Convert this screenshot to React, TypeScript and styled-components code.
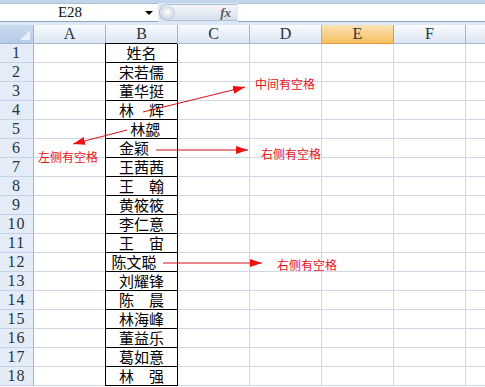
import styled, { createGlobalStyle } from 'styled-components'

const GlobalStyle = createGlobalStyle`
  html, body {
    margin: 0;
    padding: 0;
    background: #fff;
  }
  body {
    width: 485px;
    height: 387px;
    overflow: hidden;
  }
`

const Window = styled.div`
  position: relative;
  width: 485px;
  height: 387px;
  overflow: hidden;
  background: #fff;
  display: flex;
  flex-direction: column;
`

// Formula bar

const FormulaBar = styled.div`
  flex: none;
  height: 25px;
  box-sizing: border-box;
  border-top: 3px solid #c3d5ec;
  background: #dde8f5;
  padding-bottom: 3px;
  display: flex;
`

const NameBox = styled.div`
  width: 158px;
  box-sizing: border-box;
  background: #fff;
  border-top: 1px solid #aebfd4;
  border-bottom: 1px solid #8fa6c2;
  display: flex;
  align-items: center;
  font-family: 'Liberation Serif', serif;
  font-size: 15px;
  color: #111;

  .name {
    width: 140px;
    text-align: center;
  }
`

const DropArrow = styled.span`
  width: 0;
  height: 0;
  margin-left: 5px;
  border-left: 4px solid transparent;
  border-right: 4px solid transparent;
  border-top: 4px solid #000;
`

const FxPill = styled.div`
  width: 78px;
  margin: 1px 0 1px 1px;
  box-sizing: border-box;
  border: 1px solid #aebfd4;
  border-right: none;
  border-radius: 9px 0 0 9px;
  background: linear-gradient(#f4f7fb, #d6e0ec);
  display: flex;
  align-items: center;
  justify-content: space-between;
  padding: 0 6px 0 2px;
`

const RoundKnob = styled.span`
  width: 12px;
  height: 12px;
  border-radius: 50%;
  background: radial-gradient(circle at 45% 40%, #fdfdfd 0, #dde2e8 55%, #b9c2cc 100%);
  box-shadow: 0 0 0 1px #c8d1dc;
`

const FxText = styled.span`
  font-family: 'Liberation Serif', serif;
  font-style: italic;
  font-weight: bold;
  font-size: 13px;
  color: #5a5a5a;
`

const FormulaInput = styled.div`
  flex: 1;
  margin-left: 1px;
  background: #fff;
  border-top: 1px solid #aebfd4;
  border-bottom: 1px solid #8fa6c2;
`

// Sheet

const Sheet = styled.div`
  display: grid;
  grid-template-columns: 34px repeat(7, 72px);
  grid-auto-rows: 19px;
`

const Corner = styled.div`
  box-sizing: border-box;
  border-right: 1px solid #9eb6ce;
  border-bottom: 1px solid #9eb6ce;
  background: linear-gradient(#c9d9ef, #b7cbe8);
  position: relative;

  &::after {
    content: '';
    position: absolute;
    right: 3px;
    bottom: 3px;
    border-left: 10px solid transparent;
    border-bottom: 10px solid #e8eff9;
  }
`

const ColHeader = styled.div<{ $active?: boolean }>`
  box-sizing: border-box;
  border-right: 1px solid ${(p) => (p.$active ? '#f29536' : '#9eb6ce')};
  border-bottom: 1px solid ${(p) => (p.$active ? '#f29536' : '#9eb6ce')};
  background: ${(p) =>
    p.$active
      ? 'linear-gradient(#fbe3b4, #f8d18a 50%, #f3c060)'
      : 'linear-gradient(#f9fbfd, #eaf0f8 50%, #dce5f1)'};
  display: flex;
  align-items: center;
  justify-content: center;
  font-family: 'Liberation Serif', serif;
  font-size: 16px;
  color: #26343f;
`

const RowHeader = styled.div`
  box-sizing: border-box;
  border-right: 1px solid #9eb6ce;
  border-bottom: 1px solid #c5d3e5;
  background: #e4ecf7;
  display: flex;
  align-items: center;
  justify-content: center;
  font-family: 'Liberation Serif', serif;
  font-size: 16px;
  letter-spacing: 1px;
  color: #26343f;
`

const Cell = styled.div<{ $boxed?: boolean; $first?: boolean }>`
  box-sizing: border-box;
  border-right: 1px solid ${(p) => (p.$boxed ? '#000' : '#d0d7e5')};
  border-bottom: 1px solid ${(p) => (p.$boxed ? '#000' : '#d0d7e5')};
  box-shadow: ${(p) =>
    p.$boxed ? (p.$first ? '-1px 0 0 #000, -1px -1px 0 #000' : '-1px 0 0 #000') : 'none'};
  white-space: pre;
  text-align: center;
  font-family: 'Noto Sans CJK SC', sans-serif;
  font-size: 15px;
  line-height: 18px;
  color: #000;
`

// Annotations over the sheet

const Overlay = styled.svg`
  position: absolute;
  left: 0;
  top: 0;
  pointer-events: none;
`

const Note = styled.span<{ $x: number; $y: number }>`
  position: absolute;
  left: ${(p) => p.$x}px;
  top: ${(p) => p.$y}px;
  font-family: 'Noto Sans CJK SC', sans-serif;
  font-size: 12px;
  line-height: 12px;
  color: #e5121b;
  white-space: nowrap;
`

const columns = ['A', 'B', 'C', 'D', 'E', 'F', 'G']

const names = [
  '姓名',
  '宋若儒',
  '董华挺',
  '林　辉',
  '\u2002林勰',
  '金颖　',
  '王茜茜',
  '王　翰',
  '黄筱筱',
  '李仁意',
  '王　宙',
  '陈文聪　',
  '刘耀锋',
  '陈　晨',
  '林海峰',
  '董益乐',
  '葛如意',
  '林　强',
]

const arrows = [
  { x1: 143, y1: 112, x2: 245, y2: 87 },
  { x1: 127, y1: 130, x2: 73, y2: 144 },
  { x1: 156, y1: 150, x2: 248, y2: 150 },
  { x1: 163, y1: 263, x2: 262, y2: 263 },
]

const notes = [
  { x: 255, y: 78, text: '中间有空格' },
  { x: 38, y: 151, text: '左侧有空格' },
  { x: 261, y: 148, text: '右侧有空格' },
  { x: 277, y: 259, text: '右侧有空格' },
]

const RowCells = ({ row, name }: { row: number; name: string }) => (
  <>
    <RowHeader>{row}</RowHeader>
    {columns.map((c) =>
      c === 'B' ? (
        <Cell key={c} $boxed $first={row === 1}>
          {name}
        </Cell>
      ) : (
        <Cell key={c} />
      ),
    )}
  </>
)

export default function App() {
  return (
    <Window>
      <GlobalStyle />
      <FormulaBar>
        <NameBox>
          <span className="name">E28</span>
          <DropArrow />
        </NameBox>
        <FxPill>
          <RoundKnob />
          <FxText>fx</FxText>
        </FxPill>
        <FormulaInput />
      </FormulaBar>

      <Sheet>
        <Corner />
        {columns.map((c) => (
          <ColHeader key={c} $active={c === 'E'}>
            {c}
          </ColHeader>
        ))}
        {names.map((name, i) => (
          <RowCells key={i} row={i + 1} name={name} />
        ))}
      </Sheet>

      <Overlay width={485} height={387}>
        <defs>
          <marker
            id="head"
            viewBox="0 0 12 8"
            refX="12"
            refY="4"
            markerWidth="12"
            markerHeight="8"
            markerUnits="userSpaceOnUse"
            orient="auto"
          >
            <path d="M0,0 L12,4 L0,8 z" fill="#ee1111" />
          </marker>
        </defs>
        {arrows.map((a, i) => (
          <line
            key={i}
            x1={a.x1}
            y1={a.y1}
            x2={a.x2}
            y2={a.y2}
            stroke="#d40f16"
            strokeWidth={1}
            markerEnd="url(#head)"
          />
        ))}
      </Overlay>
      {notes.map((n, i) => (
        <Note key={i} $x={n.x} $y={n.y}>
          {n.text}
        </Note>
      ))}
    </Window>
  )
}
